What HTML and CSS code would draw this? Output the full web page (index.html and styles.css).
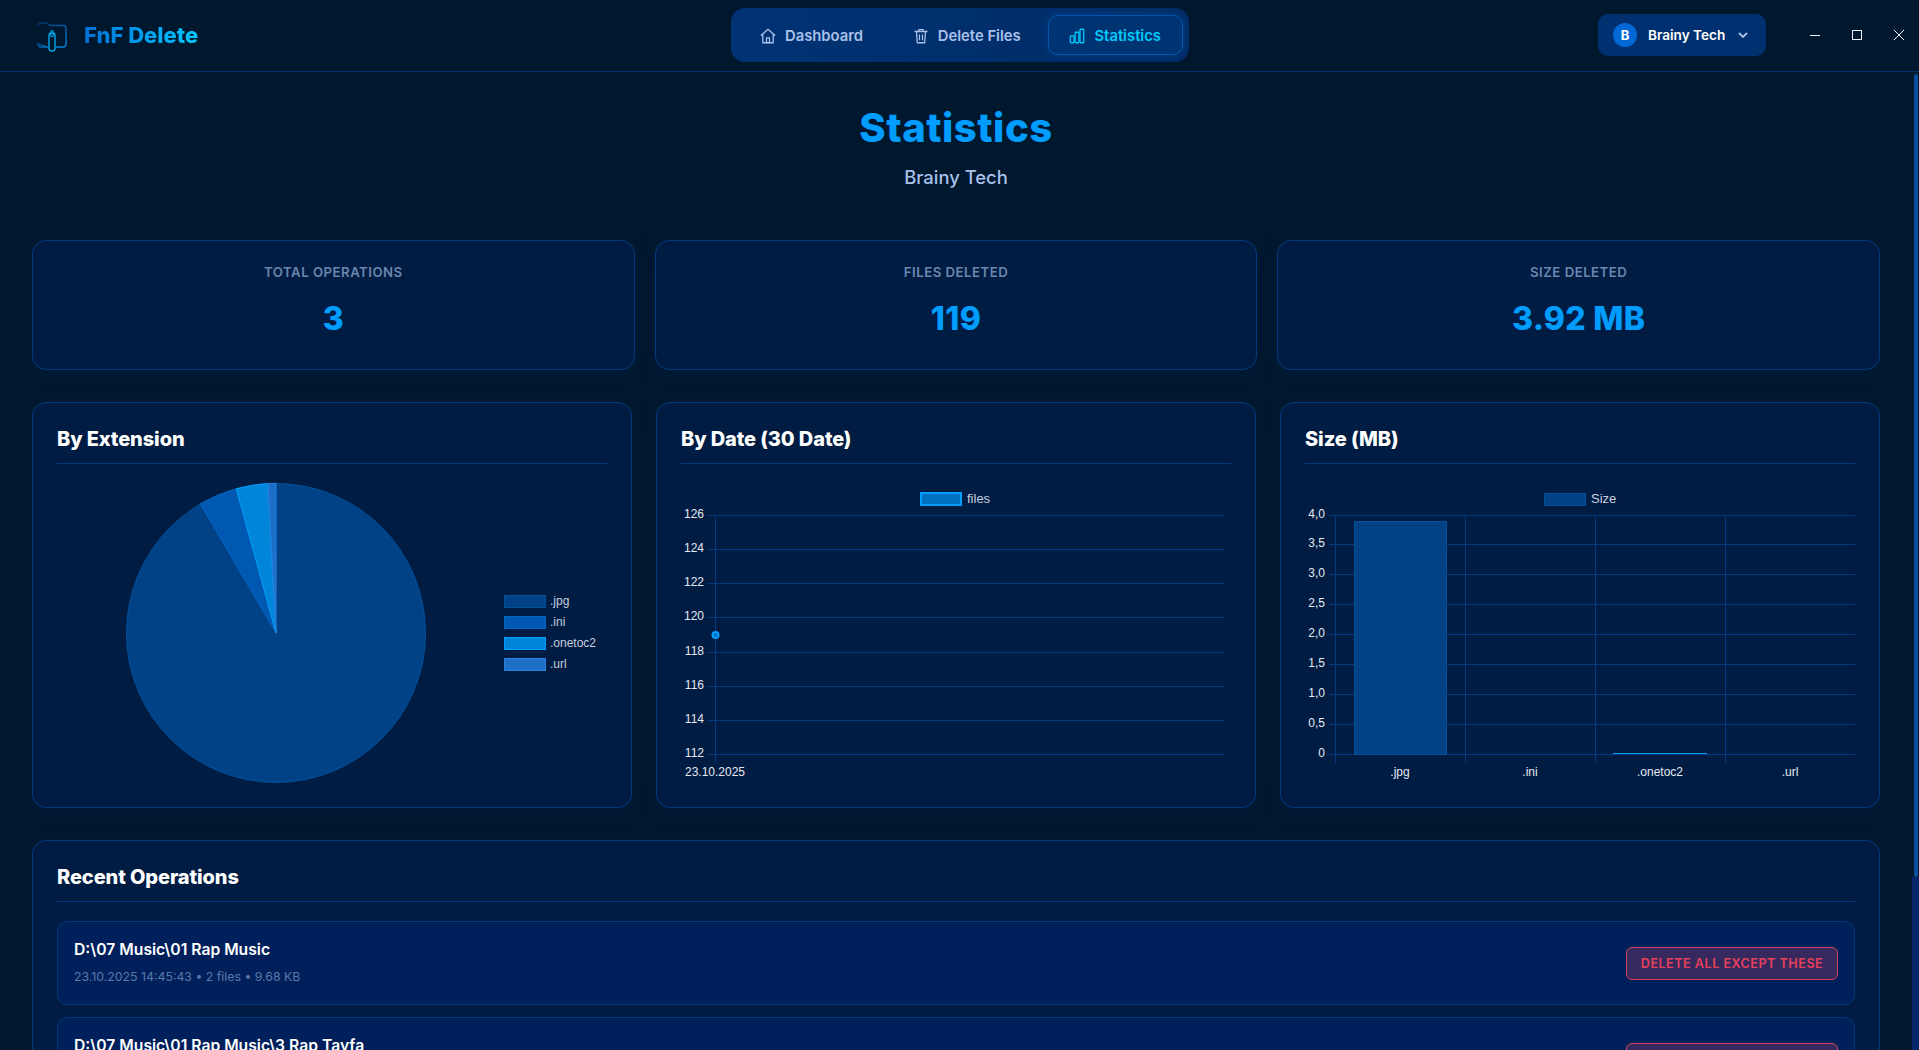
FILE: index.html
```html
<!DOCTYPE html>
<html>

<head>
  <title>FnF Delete</title>
  <link rel="stylesheet" href="styles.css">
</head>

<body>
  <header class="topbar">
    <div class="brand">
      <svg class="brand-icon" viewBox="0 0 30 30" fill="none">
        <defs>
          <linearGradient id="logo_fade" x1="0" y1="0" x2="1" y2="1">
            <stop offset="0" stop-color="#003268" />
            <stop offset="1" stop-color="#008ae8" />
          </linearGradient>
        </defs>
        <path d="M1 4.500 Q1 1 4 1 H10 L13 3.500 H26 Q29 3.500 29 6 V22 Q29 25 26 25 H19 M11 25 H4 Q1 25 1 22 Z" stroke="url(#logo_fade)" stroke-width="1.300" />
        <rect x="12" y="11" width="6" height="18" rx="2.400" stroke="#00a4e8" stroke-width="1.400" />
        <rect x="13.700" y="8.600" width="2.600" height="6" rx="1.300" stroke="#00a4e8" stroke-width="1.100" />
      </svg>
      <span class="brand-name">FnF Delete</span>
    </div>

    <nav class="tabs">
      <a class="tab">
        <svg viewBox="0 0 24 24"><path d="M3 11 12 3l9 8" /><path d="M5 9.500V21h14V9.500" /><path d="M10 21v-6.500h4V21" /></svg>
        Dashboard
      </a>
      <a class="tab">
        <svg viewBox="0 0 24 24"><path d="M4 6h16" /><path d="M9 6V3.500h6V6" /><path d="M6 6l1 15h10l1-15" /><path d="M10 10.500v6.500M14 10.500v6.500" /></svg>
        Delete Files
      </a>
      <a class="tab tab-active">
        <svg viewBox="0 0 24 24"><rect x="3" y="12" width="5" height="9" rx="1" /><rect x="9.500" y="7" width="5" height="14" rx="1" /><rect x="16" y="3" width="5" height="18" rx="1" /></svg>
        Statistics
      </a>
    </nav>

    <div class="top-right">
      <div class="user-chip">
        <span class="avatar">B</span>
        <span class="user-name">Brainy Tech</span>
        <svg class="chevron" viewBox="0 0 10 6"><path d="M1 1l4 4 4-4" /></svg>
      </div>
      <div class="win-controls">
        <svg viewBox="0 0 10 10"><path d="M0 5.500h10" /></svg>
        <svg viewBox="0 0 10 10"><rect x="0.500" y="0.500" width="9" height="9" /></svg>
        <svg viewBox="0 0 10 10"><path d="M0 0l10 10M10 0L0 10" /></svg>
      </div>
    </div>
  </header>

  <div class="workspace">
    <main class="content">
      <div class="page-head">
        <h1>Statistics</h1>
        <p>Brainy Tech</p>
      </div>

      <section class="stat-row">
        <div class="card stat-card">
          <div class="stat-label">Total Operations</div>
          <div class="stat-value">3</div>
        </div>
        <div class="card stat-card">
          <div class="stat-label">Files Deleted</div>
          <div class="stat-value">119</div>
        </div>
        <div class="card stat-card">
          <div class="stat-label">Size Deleted</div>
          <div class="stat-value">3.92 MB</div>
        </div>
      </section>

      <section class="chart-row">
        <div class="card chart-card">
          <h2>By Extension</h2>
          <svg class="chart" viewBox="0 0 550 330">
            <g transform="translate(219 156)">
              <circle class="pie-jpg" r="149.500" />
              <path class="pie-ini" d="M0 0L-75.700-129.200A149.700 149.700 0 0 1-39.700-144.300Z" />
              <path class="pie-one" d="M0 0L-39.700-144.300A149.700 149.700 0 0 1-8.200-149.400Z" />
              <path class="pie-url" d="M0 0L-8.200-149.400A149.700 149.700 0 0 1 0-149.700Z" />
            </g>
            <rect class="pie-jpg" x="447.500" y="118.500" width="41" height="12" />
            <text class="legend-text" x="493" y="128">.jpg</text>
            <rect class="pie-ini" x="447.500" y="139.500" width="41" height="12" />
            <text class="legend-text" x="493" y="149">.ini</text>
            <rect class="pie-one" x="447.500" y="160.500" width="41" height="12" />
            <text class="legend-text" x="493" y="170">.onetoc2</text>
            <rect class="pie-url" x="447.500" y="181.500" width="41" height="12" />
            <text class="legend-text" x="493" y="191">.url</text>
          </svg>
        </div>

        <div class="card chart-card">
          <h2>By Date (30 Date)</h2>
          <svg class="chart" viewBox="0 0 550 330">
            <g class="grid">
              <path d="M26.500 38.500H544M26.500 72.500H544M26.500 106.500H544M26.500 140.500H544M26.500 175.500H544M26.500 209.500H544M26.500 243.500H544M26.500 277.500H544" />
              <path d="M34.500 38V286" />
            </g>
            <g class="tick-text tick-y">
              <text x="23" y="41">126</text>
              <text x="23" y="75">124</text>
              <text x="23" y="109">122</text>
              <text x="23" y="143">120</text>
              <text x="23" y="178">118</text>
              <text x="23" y="212">116</text>
              <text x="23" y="246">114</text>
              <text x="23" y="280">112</text>
            </g>
            <text class="tick-text tick-x" x="34" y="299">23.10.2025</text>
            <circle class="line-point" cx="34.500" cy="158" r="3" />
            <rect class="line-swatch" x="240" y="16" width="40" height="12" />
            <text class="legend-text legend-wide" x="286" y="26">files</text>
          </svg>
        </div>

        <div class="card chart-card">
          <h2>Size (MB)</h2>
          <svg class="chart" viewBox="0 0 550 330">
            <g class="grid">
              <path d="M24 38.500H550M24 67.500H550M24 97.500H550M24 127.500H550M24 157.500H550M24 187.500H550M24 217.500H550M24 247.500H550M24 277.500H550" />
              <path d="M30.500 38V286M160.500 38V286M290.500 38V286M420.500 38V286" />
            </g>
            <g class="tick-text tick-y">
              <text x="20" y="41">4,0</text>
              <text x="20" y="70">3,5</text>
              <text x="20" y="100">3,0</text>
              <text x="20" y="130">2,5</text>
              <text x="20" y="160">2,0</text>
              <text x="20" y="190">1,5</text>
              <text x="20" y="220">1,0</text>
              <text x="20" y="250">0,5</text>
              <text x="20" y="280">0</text>
            </g>
            <rect class="pie-jpg" x="49.500" y="44.500" width="92" height="233" />
            <rect class="small-bar" x="308" y="276" width="94" height="1" />
            <g class="tick-text tick-x">
              <text x="95" y="299">.jpg</text>
              <text x="225" y="299">.ini</text>
              <text x="355" y="299">.onetoc2</text>
              <text x="485" y="299">.url</text>
            </g>
            <rect class="pie-jpg" x="239.500" y="16.500" width="41" height="12" />
            <text class="legend-text legend-wide" x="286" y="26">Size</text>
          </svg>
        </div>
      </section>

      <section class="card recent-card">
        <h2>Recent Operations</h2>
        <div class="op-row">
          <div>
            <div class="op-path">D:\07 Music\01 Rap Music</div>
            <div class="op-meta">23.10.2025 14:45:43 • 2 files • 9.68 KB</div>
          </div>
          <button class="danger-btn">Delete All Except These</button>
        </div>
        <div class="op-row">
          <div>
            <div class="op-path">D:\07 Music\01 Rap Music\3 Rap Tayfa</div>
            <div class="op-meta">23.10.2025 14:44:12 • 59 files • 1.96 MB</div>
          </div>
          <button class="danger-btn">Delete All Except These</button>
        </div>
      </section>
    </main>

    <aside class="scrollbar">
      <div class="scrollbar-thumb"></div>
    </aside>
  </div>
</body>

</html>
```

FILE: styles.css
```css
* {
  box-sizing: border-box;
}

html, body {
  height: 100%;
}

body {
  margin: 0;
  display: flex;
  flex-direction: column;
  overflow: hidden;
  font-family: "Inter", "Liberation Sans", sans-serif;
  background-color: #00182e;
  color: #fff;
}

/* top bar */
.topbar {
  height: 72px;
  flex: none;
  display: grid;
  grid-template-columns: 694px 458px 1fr;
  align-items: center;
  padding: 0 15px 1px 37px;
  border-bottom: 1px solid #00326e;
}

.brand {
  display: flex;
  align-items: center;
  gap: 17px;
}

.brand-icon {
  width: 30px;
  height: 30px;
  margin-top: 4px;
}

.brand-name {
  font-size: 22px;
  font-weight: 800;
  background: linear-gradient(90deg, #0070d8, #00c8ff);
  -webkit-background-clip: text;
  background-clip: text;
  color: transparent;
}

.tabs {
  height: 54px;
  display: flex;
  align-items: center;
  justify-content: space-between;
  padding: 0 6px 0 7px;
  border-radius: 14px;
  background: linear-gradient(90deg, #003274, #002c66);
}

.tab {
  height: 40px;
  display: flex;
  align-items: center;
  gap: 8px;
  padding: 1px 20px 0;
  border: 1px solid transparent;
  border-radius: 10px;
  font-size: 14.800px;
  font-weight: 600;
  color: #a9c1ea;
}

.tab svg {
  width: 18px;
  height: 18px;
  fill: none;
  stroke: currentColor;
  stroke-width: 1.700;
  stroke-linejoin: round;
  stroke-linecap: round;
}

.tab-active {
  padding: 1px 21px 0 19px;
  border-color: #0058ad;
  background: #003372;
  color: #00c8f8;
  box-shadow: 0 0 10px rgba(0, 110, 220, 0.25);
}

.top-right {
  display: flex;
  justify-content: flex-end;
  align-items: center;
}

.user-chip {
  width: 168px;
  height: 42px;
  display: flex;
  align-items: center;
  padding: 0 15px;
  border-radius: 10px;
  background: #003070;
}

.avatar {
  width: 24px;
  height: 24px;
  display: flex;
  align-items: center;
  justify-content: center;
  border-radius: 50%;
  background: #0068d4;
  font-size: 13px;
  font-weight: 700;
}

.user-name {
  margin-left: 11px;
  font-size: 13.600px;
  font-weight: 600;
}

.chevron {
  width: 10px;
  height: 6px;
  margin-left: auto;
  margin-right: 3px;
  fill: none;
  stroke: #a9c1ea;
  stroke-width: 1.800;
}

.win-controls {
  display: flex;
  gap: 32px;
  margin-left: 44px;
}

.win-controls svg {
  width: 10px;
  height: 10px;
  fill: none;
  stroke: #f0f4fa;
  stroke-width: 1;
  overflow: visible;
}

/* page */
.workspace {
  flex: 1;
  min-height: 0;
  display: flex;
}

.content {
  flex: 1;
  min-width: 0;
  overflow: hidden;
  padding: 0 32px;
}

.scrollbar {
  width: 7px;
  flex: none;
  padding: 2px 1px 0 2px;
  background: linear-gradient(#00182e 0, #00182e 805px, #00246a 805px);
}

.scrollbar-thumb {
  height: 803px;
  border-radius: 2px;
  background: #0a4f9e;
}

.page-head {
  height: 168px;
  padding-top: 31px;
  text-align: center;
}

.page-head h1 {
  margin: 0;
  font-size: 40px;
  line-height: 50px;
  font-weight: 800;
  letter-spacing: 0.500px;
  color: #009cff;
}

.page-head p {
  margin: 13px 0 0;
  font-size: 18.400px;
  line-height: 22px;
  font-weight: 500;
  color: #a9c1ea;
}

.card {
  border: 1px solid #003a7c;
  border-radius: 14px;
  background: #001c42;
  box-shadow: 0 4px 16px rgba(0, 30, 70, 0.5);
}

.stat-row {
  display: grid;
  grid-template-columns: repeat(3, 1fr);
  gap: 20px;
}

.stat-card {
  height: 130px;
  padding-top: 22px;
  text-align: center;
}

.stat-label {
  font-size: 13.200px;
  line-height: 18px;
  font-weight: 600;
  text-transform: uppercase;
  letter-spacing: 0.500px;
  color: #6b86b0;
}

.stat-value {
  margin-top: 18px;
  font-size: 32px;
  line-height: 40px;
  font-weight: 800;
  letter-spacing: 0.300px;
  color: #009cff;
}

.chart-row {
  display: grid;
  grid-template-columns: repeat(3, 1fr);
  gap: 24px;
  margin-top: 32px;
}

.chart-card {
  height: 406px;
  padding: 24px 24px 0;
}

h2 {
  margin: 0;
  padding-bottom: 12px;
  border-bottom: 1px solid #003a7c;
  font-size: 20px;
  line-height: 24px;
  font-weight: 800;
  letter-spacing: -0.100px;
}

.chart {
  display: block;
  width: 550px;
  height: 330px;
  margin-top: 13px;
  overflow: visible;
}

.grid path {
  fill: none;
  stroke: #003b80;
  stroke-width: 1;
}

.legend-text {
  font-family: "Liberation Sans", sans-serif;
  font-size: 12px;
  fill: #c6d0e0;
}

.legend-wide {
  font-size: 13px;
}

.tick-text {
  font-family: "Liberation Sans", sans-serif;
  font-size: 12px;
  fill: #e4e9f2;
}

.tick-y {
  text-anchor: end;
}

.tick-x {
  text-anchor: middle;
}

.pie-jpg {
  fill: #004285;
  stroke: #00509c;
  stroke-width: 1;
}

.pie-ini {
  fill: #0058b0;
  stroke: #0066c4;
  stroke-width: 1;
}

.pie-one {
  fill: #0085d8;
  stroke: #00a0ff;
  stroke-width: 1;
}

.pie-url {
  fill: #1e6fc8;
  stroke: #2680e0;
  stroke-width: 1;
}

.line-swatch {
  fill: #0070c0;
  stroke: #009fff;
  stroke-width: 2;
}

.line-point {
  fill: #0070c0;
  stroke: #009fff;
  stroke-width: 2;
}

.small-bar {
  fill: #0a9bef;
}

.recent-card {
  margin-top: 32px;
  padding: 24px 24px 0;
}

.op-row {
  height: 84px;
  display: flex;
  align-items: center;
  justify-content: space-between;
  margin-top: 12px;
  padding: 0 16px;
  border: 1px solid #003a7c;
  border-radius: 10px;
  background: #00205c;
}

h2 + .op-row {
  margin-top: 19px;
}

.op-path {
  font-size: 15.700px;
  line-height: 20px;
  font-weight: 600;
}

.op-meta {
  margin-top: 8px;
  font-size: 12.300px;
  line-height: 18px;
  color: #5a78a8;
}

.danger-btn {
  width: 212px;
  height: 33px;
  padding: 0;
  border: 1px solid #d9415f;
  border-radius: 6px;
  background: #36295e;
  font-family: inherit;
  font-size: 12.600px;
  font-weight: 600;
  letter-spacing: 0.500px;
  text-transform: uppercase;
  color: #e8405a;
}
```
